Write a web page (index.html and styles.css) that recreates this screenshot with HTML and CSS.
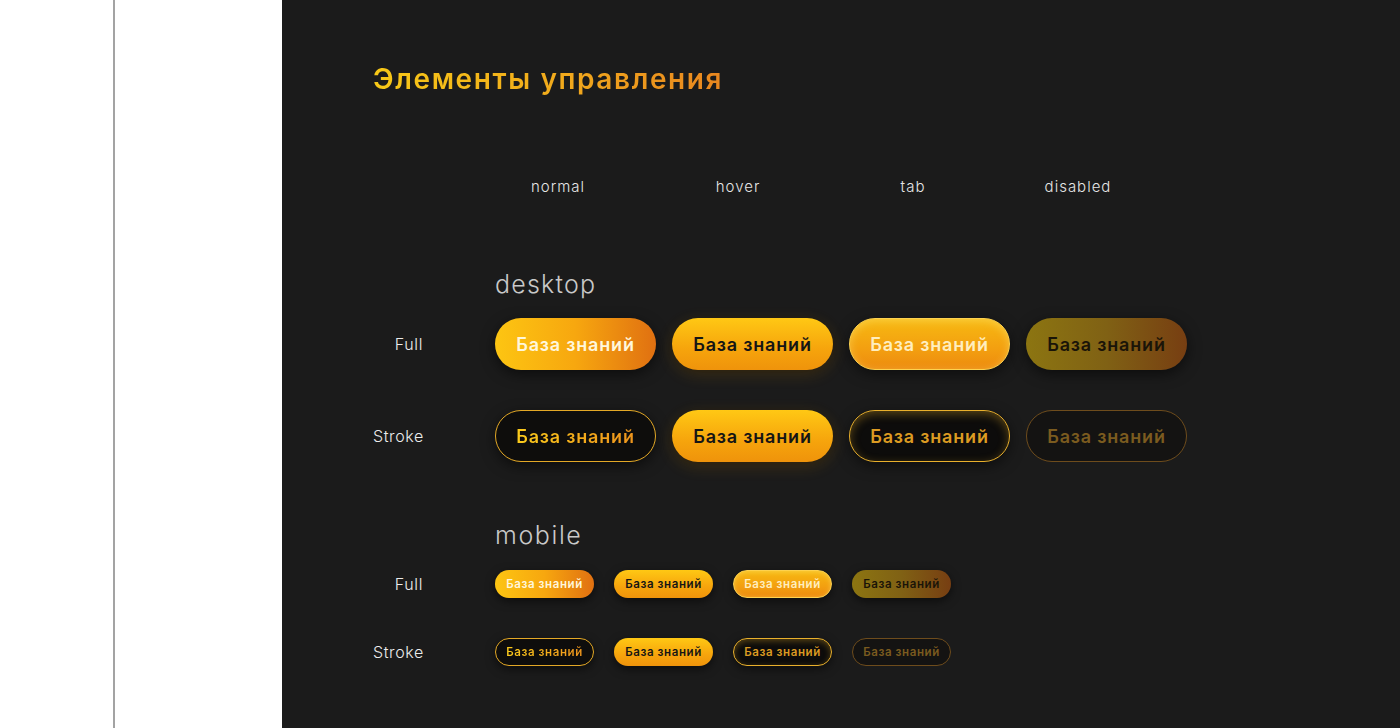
FILE: index.html
```html
<!DOCTYPE html>
<html lang="ru">
<head>
  <meta charset="UTF-8">
  <title>Элементы управления</title>
  <link rel="stylesheet" href="styles.css">
</head>
<body>
  <div class="page">
    <div class="side"><div class="sheet"></div></div>

    <div class="panel">
      <h1 class="title">Элементы управления</h1>

      <div class="states">
        <span>normal</span>
        <span>hover</span>
        <span>tab</span>
        <span>disabled</span>
      </div>

      <h2 class="group">desktop</h2>
      <div class="row">
        <span class="row-label">Full</span>
        <div class="btns">
          <button class="btn full-normal">База знаний</button>
          <button class="btn hover">База знаний</button>
          <button class="btn full-tab">База знаний</button>
          <button class="btn full-disabled">База знаний</button>
        </div>
      </div>
      <div class="row gap">
        <span class="row-label">Stroke</span>
        <div class="btns">
          <button class="btn stroke-normal"><span class="grad">База знаний</span></button>
          <button class="btn hover">База знаний</button>
          <button class="btn stroke-tab">База знаний</button>
          <button class="btn stroke-disabled">База знаний</button>
        </div>
      </div>

      <h2 class="group mobile-head">mobile</h2>
      <div class="row small">
        <span class="row-label">Full</span>
        <div class="btns">
          <button class="btn full-normal">База знаний</button>
          <button class="btn hover">База знаний</button>
          <button class="btn full-tab">База знаний</button>
          <button class="btn full-disabled">База знаний</button>
        </div>
      </div>
      <div class="row small gap">
        <span class="row-label">Stroke</span>
        <div class="btns">
          <button class="btn stroke-normal"><span class="grad">База знаний</span></button>
          <button class="btn hover">База знаний</button>
          <button class="btn stroke-tab">База знаний</button>
          <button class="btn stroke-disabled">База знаний</button>
        </div>
      </div>
    </div>
  </div>
</body>
</html>
```

FILE: styles.css
```css
html, body { margin: 0; height: 100%; }
body { font-family: Inter, "Noto Sans", sans-serif; background: #fff; }
.page { display: flex; height: 728px; overflow: hidden; }

.side { width: 282px; padding-left: 113px; box-sizing: border-box; background: #fff; }
.sheet { height: 100%; border-left: 2px solid #a3a3a3; }

.panel { flex: 1; background: #1b1b1b; padding: 62px 0 0 91px; box-sizing: border-box; }

.title {
  margin: 0; font-size: 28px; line-height: 34px; font-weight: 600; letter-spacing: 1.6px;
  display: inline-block;
  background: linear-gradient(90deg, #f7c817 0%, #f1a91c 55%, #e8861f 100%);
  -webkit-background-clip: text; background-clip: text; color: transparent;
}

.states {
  display: grid; grid-template-columns: 180px 180px 170px 160px;
  margin: 81px 0 0 95px; color: #e6e6e6; font-size: 15px; line-height: 20px; font-weight: 300; letter-spacing: 1px;
}
.states span { text-align: center; }

.group { margin: 72px 0 0 122px; font-size: 25px; line-height: 30px; font-weight: 300; color: #c9c9c9; letter-spacing: 1.2px; }
.mobile-head { margin-top: 58px; letter-spacing: 1.6px; }

.row { display: flex; align-items: center; margin-top: 19px; }
.row.gap { margin-top: 40px; }
.row-label { width: 50px; margin-right: 72px; text-align: right; color: #ececec; font-size: 16px; font-weight: 300; letter-spacing: 0.6px; }
.btns { display: flex; gap: 16px; }

.btn {
  width: 161px; height: 52px; border-radius: 26px; box-sizing: border-box; border: 0;
  font-family: inherit; font-size: 18px; font-weight: 600; letter-spacing: 0.8px; padding: 0;
  display: flex; align-items: center; justify-content: center;
  box-shadow: 0 4px 14px rgba(0, 0, 0, 0.55);
}

.full-normal { background: linear-gradient(90deg, #fdc512 0%, #f7a70f 50%, #e07011 100%); color: #fff7dc; }
.hover { background: linear-gradient(180deg, #ffc814 0%, #f6a40c 60%, #ef930b 100%); color: #151515; box-shadow: 0 4px 16px rgba(255, 170, 20, 0.18), 0 2px 8px rgba(0, 0, 0, 0.5); }
.full-tab {
  background: linear-gradient(180deg, #f7b912 0%, #f39f10 60%, #ed8b0f 100%); color: #ffeebf;
  border: 1.5px solid #fdd24f; box-shadow: inset 0 2px 8px rgba(255, 230, 120, 0.45), 0 4px 14px rgba(0, 0, 0, 0.5);
}
.full-disabled { background: linear-gradient(90deg, #8c7511 0%, #806114 50%, #773e12 100%); color: #1a1408; }

.stroke-normal { background: #0e0d0c; border: 1.5px solid #e3a826; }
.grad { background: linear-gradient(90deg, #fbcb1c, #f3a81b 60%, #ec941d); -webkit-background-clip: text; background-clip: text; color: transparent; }
.stroke-tab {
  background: #0d0c0b; color: #dc9b22; border: 1.5px solid #e9b02c;
  box-shadow: inset 0 3px 10px rgba(233, 175, 40, 0.35), 0 4px 14px rgba(0, 0, 0, 0.5);
}
.stroke-disabled { background: #141312; color: #7b5b1f; border: 1.5px solid #6e4c1c; box-shadow: none; }

.small { margin-top: 20px; }
.small .btns { gap: 20px; }
.small .btn { width: 99px; height: 28px; border-radius: 14px; font-size: 11.5px; letter-spacing: 0.6px; box-shadow: 0 3px 10px rgba(0, 0, 0, 0.55); }
.small .stroke-disabled { box-shadow: none; }
.small .full-tab { box-shadow: inset 0 1px 5px rgba(255, 230, 120, 0.45), 0 3px 10px rgba(0, 0, 0, 0.5); }
.small .stroke-tab { box-shadow: inset 0 2px 6px rgba(233, 175, 40, 0.35), 0 3px 10px rgba(0, 0, 0, 0.5); }
```
